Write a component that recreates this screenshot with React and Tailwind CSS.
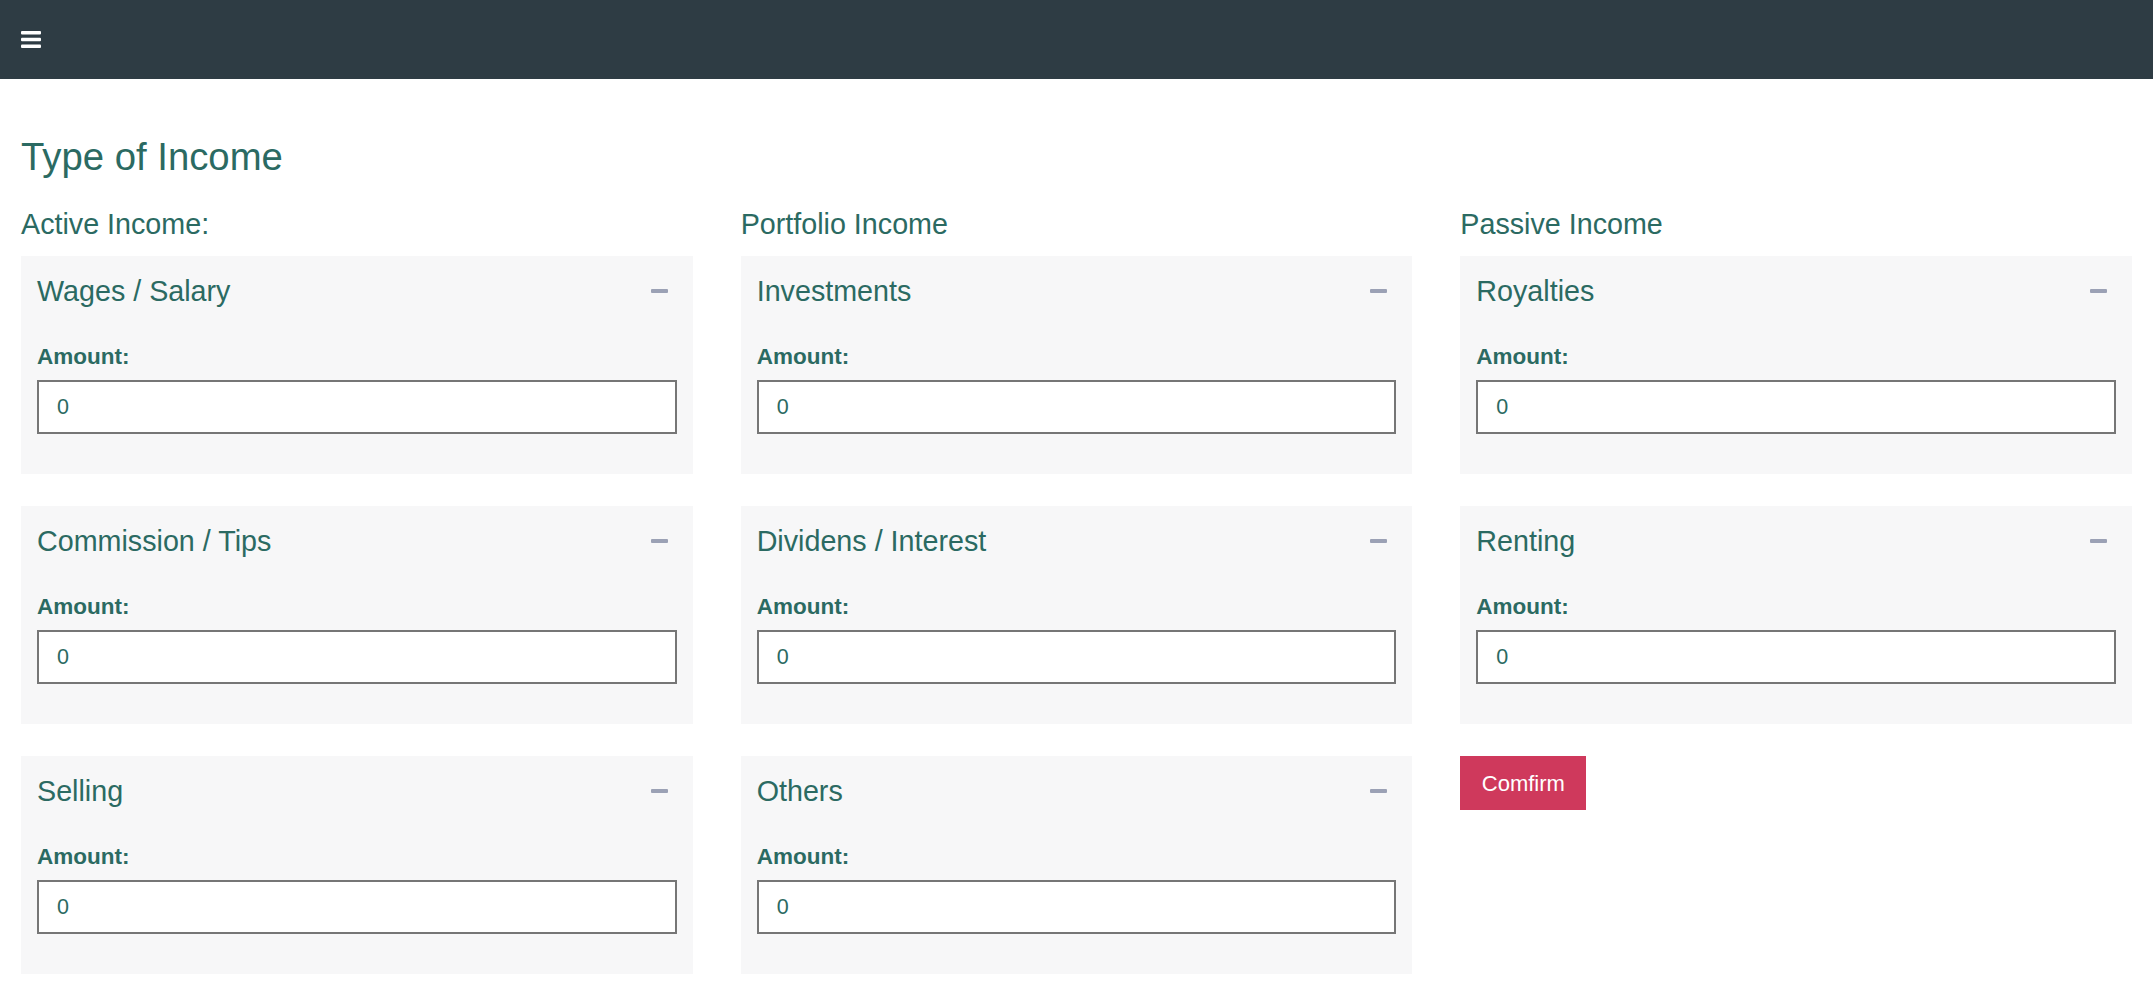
import React from "react";

const columns = [
  { title: "Active Income:", items: ["Wages / Salary", "Commission / Tips", "Selling"] },
  { title: "Portfolio Income", items: ["Investments", "Dividens / Interest", "Others"] },
  { title: "Passive Income", items: ["Royalties", "Renting"], confirm: true },
];

function Panel({ title }) {
  return (
    <div className="bg-[#f7f7f8] px-4 pt-4 pb-10">
      <div className="flex items-center justify-between">
        <h4 className="text-[28.7px] leading-[38px] text-[#2b6a62] font-normal">{title}</h4>
        <button type="button" className="mr-[9px] flex items-center justify-center h-[20px]">
          <span className="block w-[17px] h-[4px] rounded-[1px] bg-[#9ba1b5]"></span>
        </button>
      </div>
      <label className="block mt-[34px] text-[22.5px] leading-[26px] font-bold text-[#2b6a62]">Amount:</label>
      <input
        type="text"
        defaultValue="0"
        className="mt-[10px] block w-full h-[54px] border-2 border-[#767676] bg-white pl-[18px] text-[21.5px] text-[#2b6a62] outline-none"
      />
    </div>
  );
}

export default function App() {
  return (
    <div className="min-h-screen bg-white" style={{ fontFamily: '"Liberation Sans", Arial, sans-serif' }}>
      <header className="h-[79px] bg-[#2e3c44] flex items-center pl-[21px]">
        <svg width="20" height="17" viewBox="0 0 20 17">
          <rect x="0" y="0" width="20" height="3.4" rx="1" fill="#ffffff" />
          <rect x="0" y="6.8" width="20" height="3.4" rx="1" fill="#ffffff" />
          <rect x="0" y="13.6" width="20" height="3.4" rx="1" fill="#ffffff" />
        </svg>
      </header>
      <main className="px-[21px] pt-[55px] pb-[26px]">
        <h2 className="text-[38.3px] leading-[46px] text-[#2b6a62] font-normal">Type of Income</h2>
        <div className="mt-[27px] grid grid-cols-3 gap-x-[48px]">
          {columns.map((col) => (
            <div key={col.title} className="flex flex-col">
              <h3 className="text-[28.7px] leading-[34px] text-[#2b6a62] font-normal mb-[15px]">{col.title}</h3>
              <div className="flex flex-col gap-[32px]">
                {col.items.map((it) => (
                  <Panel key={it} title={it} />
                ))}
                {col.confirm && (
                  <div>
                    <button
                      type="button"
                      className="h-[54px] w-[126px] bg-[#cf395c] text-white text-[22px]"
                    >
                      Comfirm
                    </button>
                  </div>
                )}
              </div>
            </div>
          ))}
        </div>
      </main>
    </div>
  );
}
